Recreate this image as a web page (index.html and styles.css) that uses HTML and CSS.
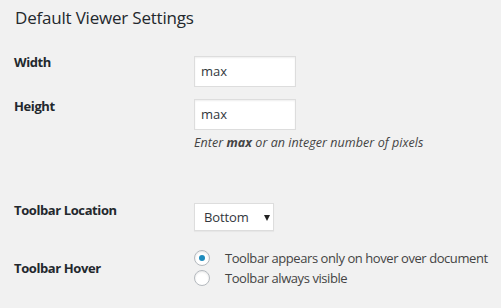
FILE: index.html
```html
<!DOCTYPE html>
<html>
<head>
<meta charset="utf-8">
<link rel="stylesheet" href="styles.css">
</head>
<body>
<div class="wrap">
  <h2 class="title">Default Viewer Settings</h2>
  <div class="row row-width">
    <div class="label">Width</div>
    <div class="field"><div class="input">max</div></div>
  </div>
  <div class="row row-height">
    <div class="label">Height</div>
    <div class="field">
      <div class="input">max</div>
      <p class="help">Enter <b>max</b> or an integer number of pixels</p>
    </div>
  </div>
  <div class="row row-location">
    <div class="label">Toolbar Location</div>
    <div class="field">
      <div class="select"><span class="select-text">Bottom</span><span class="arrow"></span></div>
    </div>
  </div>
  <div class="row row-hover">
    <div class="label">Toolbar Hover</div>
    <div class="field radios">
      <div class="radio-line"><span class="radio checked"></span><span>Toolbar appears only on hover over document</span></div>
      <div class="radio-line"><span class="radio"></span><span>Toolbar always visible</span></div>
    </div>
  </div>
</div>
</body>
</html>
```

FILE: styles.css
```css
html, body {
  margin: 0;
  padding: 0;
  background: #f1f1f1;
}
body {
  font-family: "Open Sans", "Noto Sans", sans-serif;
  color: #23282d;
  font-size: 13px;
}
.wrap {
  padding: 0 0 0 14px;
}
.title {
  margin: 0;
  padding-top: 6px;
  padding-left: 1px;
  font-size: 17px;
  font-weight: 400;
  line-height: 24px;
  letter-spacing: -0.2px;
  color: #23282d;
}
.row {
  display: flex;
  align-items: flex-start;
}
.label {
  width: 180px;
  flex: none;
  font-weight: 700;
  font-size: 13px;
  line-height: 20px;
  letter-spacing: -0.4px;
  color: #23282d;
  white-space: nowrap;
}
.row-width { margin-top: 26px; }
.row-width .label { margin-top: -4px; }
.row-height { margin-top: 12px; }
.row-height .label { margin-top: -3px; }
.row-location { margin-top: 51px; }
.row-location .label { margin-top: -3px; }
.row-hover { margin-top: 19px; }
.row-hover .label { margin-top: 8px; }
.input {
  height: 29px;
  width: 94px;
  box-sizing: content-box;
  border: 1px solid #ddd;
  background: #fff;
  box-shadow: inset 0 1px 2px rgba(0,0,0,0.07);
  padding: 0 0 0 6px;
  line-height: 29px;
  font-size: 13px;
  color: #32373c;
}
.help {
  margin: 4px 0 0;
  font-style: italic;
  font-size: 12.5px;
  line-height: 18px;
  letter-spacing: 0.05px;
  color: #444;
  white-space: nowrap;
}
.help b {
  font-weight: 700;
}
.select {
  display: flex;
  align-items: center;
  justify-content: space-between;
  width: 78px;
  height: 26px;
  border: 1px solid #ddd;
  background: #fff;
  box-shadow: 0 1px 1px rgba(0,0,0,0.04);
  box-sizing: content-box;
  font-size: 13px;
  color: #32373c;
}
.select-text {
  padding-left: 9px;
  letter-spacing: -0.1px;
}
.arrow {
  width: 0;
  height: 0;
  border-left: 3px solid transparent;
  border-right: 3px solid transparent;
  border-top: 6px solid #222;
  margin-right: 3px;
  margin-top: 1px;
}
.radios {
  display: flex;
  flex-direction: column;
  gap: 4px;
}
.radio-line {
  display: flex;
  align-items: center;
  line-height: 16px;
  font-size: 13px;
  letter-spacing: -0.43px;
  color: #444;
  white-space: nowrap;
}
.radio {
  width: 14px;
  height: 14px;
  border: 1px solid #b4b9be;
  border-radius: 50%;
  background: #fff;
  box-shadow: inset 0 1px 2px rgba(0,0,0,0.1);
  margin-right: 15px;
  position: relative;
  flex: none;
}
.radio.checked::before {
  content: "";
  position: absolute;
  left: 4px;
  top: 4px;
  width: 6px;
  height: 6px;
  border-radius: 50%;
  background: #1e8cbe;
}
```
